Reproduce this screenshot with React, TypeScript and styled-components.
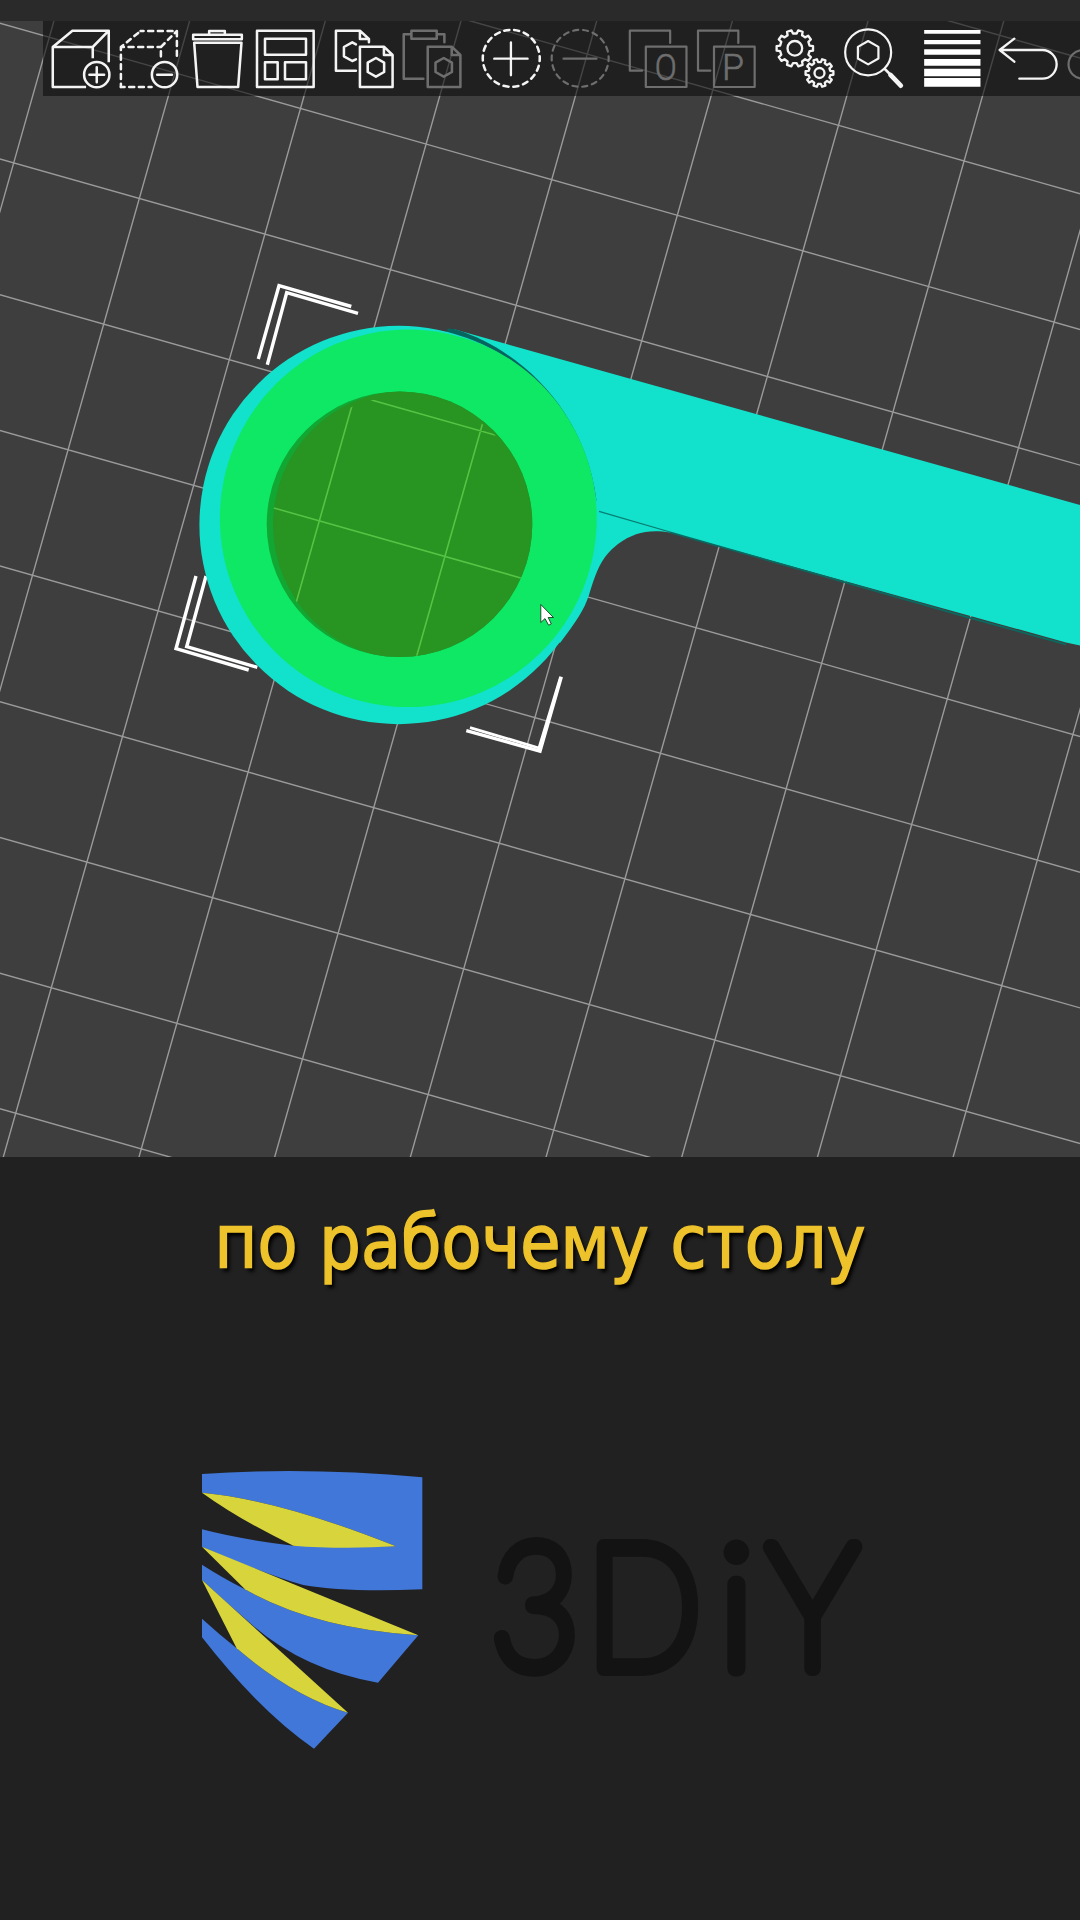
import React from "react";
import styled, { createGlobalStyle } from "styled-components";

const GlobalStyle = createGlobalStyle`
  html, body { margin: 0; padding: 0; background: #212121; }
  * { box-sizing: border-box; }
`;

const Page = styled.main`
  display: flex;
  flex-direction: column;
  width: 1080px;
  height: 1920px;
  overflow: hidden;
  background: #212121;
`;

const TopStrip = styled.header`
  flex: none;
  height: 21px;
  background: #2a2a2a;
`;

const Scene = styled.section`
  flex: none;
  display: grid;
  grid-template: 1136px / 1080px;
  overflow: hidden;
  background: #3e3e3e;
`;

const Viewport = styled.svg`
  grid-area: 1 / 1;
  display: block;
  width: 1080px;
  height: 1136px;
`;

const Toolbar = styled.nav`
  grid-area: 1 / 1;
  align-self: start;
  display: flex;
  gap: 10.1px;
  height: 75px;
  margin-left: 43px;
  padding-left: 2.8px;
  overflow: hidden;
  background: rgba(14, 14, 14, 0.6);
`;

const ToolGroup = styled.div`
  flex: none;
  display: flex;
`;

const ToolButton = styled.button<{ $dim?: boolean }>`
  flex: none;
  display: block;
  width: 68.53px;
  height: 75px;
  padding: 0;
  border: 0;
  background: none;
  color: ${(p) => (p.$dim ? "#6e6e6e" : "#f4f4f4")};
`;

const ToolIcon = styled.svg`
  display: block;
  width: 100%;
  height: 100%;
  fill: none;
  stroke: currentColor;
  stroke-width: 7.6;
  stroke-linejoin: round;
  stroke-linecap: round;
  overflow: visible;
`;

const Caption = styled.p`
  flex: none;
  height: 283px;
  margin: 0;
  padding-top: 38px;
  text-align: center;
  white-space: nowrap;
  font: 75px/95px "DejaVu Sans Condensed", "DejaVu Sans", "Noto Sans", sans-serif;
  font-stretch: condensed;
  word-spacing: 1px;
  color: #edc22b;
  -webkit-text-stroke: 1.5px #edc22b;
  text-shadow: 3px 4px 4px #000;
  transform: scaleX(0.971);
`;

const Brand = styled.footer`
  display: flex;
  align-items: flex-start;
  gap: 30px;
  padding-left: 180px;
`;

const BrandMark = styled.svg`
  flex: none;
  width: 260px;
  height: 330px;
`;

const Wordmark = styled.svg`
  flex: none;
  width: 420px;
  height: 190px;
  margin-top: 70px;
  overflow: visible;
`;

const WordLetter = styled.text`
  font-family: Lato, "Open Sans", sans-serif;
  font-weight: 100;
  font-size: 172px;
  fill: #131313;
  stroke: #131313;
  stroke-width: 16px;
  stroke-linejoin: round;
`;

const IconLetter = styled.text`
  font-family: Roboto, sans-serif;
  font-size: 112px;
  font-weight: 300;
  fill: currentColor;
  stroke: currentColor;
  stroke-width: 2px;
`;

type Pt = [number, number];
const ORIGIN: Pt = [767.3, 376.5];
const U: Pt = [125.6, 35.6];
const V: Pt = [-35.6, 125.6];
const at = (a: number, b: number): Pt => [
  ORIGIN[0] + a * U[0] + b * V[0],
  ORIGIN[1] + a * U[1] + b * V[1],
];

const gridPath = (() => {
  const parts: string[] = [];
  for (let i = -12; i <= 12; i++) {
    parts.push(`M${at(i, -12).join(" ")}L${at(i, 14).join(" ")}`);
    parts.push(`M${at(-12, i).join(" ")}L${at(12, i).join(" ")}`);
  }
  return parts.join("");
})();

const gear = (cx: number, cy: number, outer: number, root: number, teeth: number) => {
  const pts: string[] = [];
  const step = (Math.PI * 2) / teeth;
  for (let i = 0; i < teeth; i++) {
    const mid = i * step + step / 2 - Math.PI / 2;
    const corners: Pt[] = [
      [-0.3, root],
      [-0.2, outer],
      [0.2, outer],
      [0.3, root],
    ];
    corners.forEach(([f, r]) => {
      pts.push(`${(cx + r * Math.cos(mid + f * step)).toFixed(1)} ${(cy + r * Math.sin(mid + f * step)).toFixed(1)}`);
    });
  }
  return `M${pts.join("L")}Z`;
};

const hexagon = (cx: number, cy: number, r: number) =>
  `M${cx} ${cy - r}l${r * 0.88} ${r / 2}v${r}l${-r * 0.88} ${r / 2}l${-r * 0.88} ${-r / 2}v${-r}z`;

const LetterIcon = ({ dx, letter }: { dx: number; letter: string }) => (
  <g transform={`translate(${dx} 0)`} strokeWidth={6.6}>
    <path d="M968 213H931V93H1052V130" />
    <rect x="979" y="141" width="122" height="121" />
    <IconLetter x={letter === "O" ? 1006 : 1003} y="241" textLength="66" lengthAdjust="spacingAndGlyphs">
      {letter}
    </IconLetter>
  </g>
);

const FrontPage = ({ x }: { x: number }) => (
  <path d={`M${x} 141h72l26 25v96h-98zM${x + 72} 141v25h26` + hexagon(x + 48, 203, 28)} />
);

type Tool = { name: string; origin: number; dim?: boolean; art: React.ReactNode };

const groups: Tool[][] = [
  [
    {
      name: "Add",
      origin: 137.7,
      art: (
        <>
          <path d="M278 176V142H158V262H258M158 142L217 93H326V188M326 93L278 142" strokeLinecap="butt" />
          <circle cx="290" cy="225" r="38" />
          <path d="M290 203V248M268 225H312" />
        </>
      ),
    },
    {
      name: "Delete",
      origin: 343.3,
      art: (
        <>
          <path d="M364 142V262M364 142H484M364 142L423 94" strokeDasharray="15 14" strokeDashoffset="6" />
          <path d="M423 94H532V182M532 94L484 142V176" strokeDasharray="15 14" strokeDashoffset="6" />
          <path d="M364 262H456" strokeDasharray="15 14" strokeDashoffset="4" />
          <circle cx="495" cy="225" r="38" />
          <path d="M473 225H517" />
        </>
      ),
    },
    {
      name: "Delete all",
      origin: 548.5,
      art: <path d="M627 103V94H674V103M579 105H725V119H579ZM582 129H724L714 262H592Z" />,
    },
    {
      name: "Arrange",
      origin: 754,
      art: <path d="M772 93H942V262H772ZM796 117H919V165H796ZM796 188H834V239H796ZM856 188H919V239H856Z" />,
    },
  ],
  [
    {
      name: "Copy",
      origin: 30.2,
      art: (
        <>
          <path d="M108 213H48V93H120L147 118V128M120 93V118H147M108 134L97 128L72 142V170L97 184L108 179" />
          <FrontPage x={120} />
        </>
      ),
    },
    {
      name: "Paste",
      origin: 235.8,
      dim: true,
      art: (
        <>
          <path d="M312 237H253V104H274M354 104H375V128M276 93H352V117H276Z" />
          <FrontPage x={325} />
        </>
      ),
    },
  ],
  [
    {
      name: "Add instance",
      origin: 472.2,
      art: (
        <>
          <circle cx="575" cy="176" r="85.5" strokeDasharray="15.4 14.45" strokeDashoffset="7" />
          <path d="M524 177H624M574 128V227" strokeWidth="7" />
        </>
      ),
    },
    {
      name: "Remove instance",
      origin: 677.5,
      dim: true,
      art: (
        <>
          <circle cx="780" cy="176" r="85.5" strokeWidth="6.6" strokeDasharray="15.4 14.45" strokeDashoffset="7" />
          <path d="M730 177H829" strokeWidth="6.5" />
        </>
      ),
    },
  ],
  [
    { name: "Split to objects", origin: 913.5, dim: true, art: <LetterIcon dx={0} letter="O" /> },
    { name: "Split to parts", origin: -19.5, dim: true, art: <LetterIcon dx={-935.5} letter="P" /> },
  ],
  [
    {
      name: "Settings",
      origin: 214.5,
      art: (
        <g strokeWidth="7">
          <path d={gear(286, 146, 55, 45, 10)} />
          <circle cx="286" cy="146" r="22" />
          <path d={gear(360, 220, 42, 33, 10)} />
          <circle cx="360" cy="220" r="15" />
        </g>
      ),
    },
    {
      name: "Search",
      origin: 419.5,
      art: (
        <>
          <circle cx="504" cy="158" r="69" strokeWidth="6.6" />
          <path d={hexagon(504, 159, 35)} strokeWidth="6.6" />
          <path d="M554 208L572 226" />
          <path d="M571 226L602 258" strokeWidth="14" />
        </>
      ),
    },
  ],
  [
    {
      name: "Variable layer height",
      origin: 654.5,
      art: (
        <path
          stroke="none"
          fill="#fff"
          d="M673 91H842V102H673ZM673 121H842V134H673ZM673 149H842V165H673ZM673 178H842V198H673ZM673 207H842V230H673ZM673 235H842V261H673Z"
        />
      ),
    },
  ],
  [
    {
      name: "Undo",
      origin: 891,
      art: <path d="M943 117L899 151L943 186M899 151H1027A43 43 0 0 1 1027 237H958" strokeWidth="7" />,
    },
    {
      name: "Redo",
      origin: 1096.5,
      dim: true,
      art: <path d="M1240 117L1284 151L1240 186M1284 151H1147A43 43 0 0 0 1147 237H1215" strokeWidth="6.6" />,
    },
  ],
];

const Model = () => (
  <>
    <path
      d="M455 329.6L1080 505V645.6L1066 642.5L670 532.5C650 529 634 532 618 544C600 558 596 573 589 595C584 610 576 622 560 643L430 560V340Z"
      fill="#12e1cb"
    />
    <path d="M599 511.3L670 532" stroke="#087d72" strokeWidth="1.3" fill="none" />
    <path d="M670 532.3L969 617.7L1066 644.3" stroke="#0a6a60" strokeWidth="1.8" fill="none" />
    <path d="M448 328.6L456 329.6C518 349 584 407 596.4 500L590 520L440 345Z" fill="#06665f" />
    <circle cx="398.6" cy="525" r="199.2" fill="#12e1cb" />
    <ellipse cx="408.3" cy="518.3" rx="188.4" ry="188.8" fill="#0fe864" />
    <circle cx="399.5" cy="524.3" r="132.8" fill="#12a733" />
    <g clipPath="url(#bore)">
      <ellipse cx="406" cy="524.8" rx="133" ry="134" fill="#289422" />
      <g clipPath="url(#floor)">
        <path d={gridPath} stroke="#55c444" strokeWidth="1.6" />
      </g>
    </g>
  </>
);

const Brackets = () => (
  <g stroke="#fff" strokeWidth="3.4" fill="none">
    <path d="M258.3 359L279 285.7L351.3 306.5" />
    <path d="M267.3 364.7L286.7 292.7L358 313.3" />
    <path d="M196 576L176 648.7L248.7 670" />
    <path d="M206 576L186.7 646.7L257.3 667.3" />
    <path d="M561.3 676.7L540 751.2L466.3 730.7" />
    <path d="M560.6 677L539 748L470 727.6" strokeWidth="2.8" />
  </g>
);

const Cursor = () => (
  <path
    d="M540.8 604.5V622.5L545 618.6L548.6 625.2L551.3 623.9L548.2 617.5H553.5Z"
    fill="#fff"
    stroke="#123b20"
    strokeWidth="0.9"
  />
);

export default function App() {
  return (
    <Page>
      <GlobalStyle />
      <TopStrip />
      <Scene>
        <Viewport viewBox="0 21 1080 1136">
          <defs>
            <clipPath id="bore">
              <circle cx="399.5" cy="524.3" r="132.8" />
            </clipPath>
            <clipPath id="floor">
              <circle cx="402.5" cy="526.5" r="130" />
            </clipPath>
          </defs>
          <path d={gridPath} stroke="#9a9a9a" strokeWidth="1.4" />
          <Brackets />
          <Model />
          <Cursor />
        </Viewport>
        <Toolbar>
          {groups.map((group, i) => (
            <ToolGroup key={i}>
              {group.map((tool) => (
                <ToolButton key={tool.name} $dim={tool.dim} aria-label={tool.name}>
                  <ToolIcon viewBox={`${tool.origin} 64 205.6 225`}>{tool.art}</ToolIcon>
                </ToolButton>
              ))}
            </ToolGroup>
          ))}
        </Toolbar>
      </Scene>
      <Caption>по рабочему столу</Caption>
      <Brand>
        <BrandMark viewBox="0 0 780 990">
          <g fill="#4177d8">
            <path d="M66 102Q380 80 727 112V448Q500 458 370 435Q260 405 66 320V268Q180 298 340 317L648 319Q300 180 66 158Z" />
            <path d="M66 374Q125 412 195 448Q400 565 715 586L594 728Q360 688 200 540Q130 480 66 420Z" />
            <path d="M66 536Q120 585 170 625Q340 770 504 818L402 926Q240 815 66 592Z" />
          </g>
          <g fill="#d8d53c">
            <path d="M66 158Q300 180 648 319Q480 328 340 317Q180 240 66 158Z" />
            <path d="M66 320L715 586Q400 565 195 448Z" />
            <path d="M66 420L504 818Q340 770 170 625Z" />
          </g>
        </BrandMark>
        <Wordmark viewBox="0 0 420 190">
          <WordLetter transform="translate(21 158) scale(0.885 1)">3</WordLetter>
          <WordLetter transform="translate(115.9 158) scale(0.885 1)">D</WordLetter>
          <WordLetter transform="translate(248.6 158)">i</WordLetter>
          <WordLetter transform="translate(297.2 158) scale(0.925 1)">Y</WordLetter>
        </Wordmark>
      </Brand>
    </Page>
  );
}
